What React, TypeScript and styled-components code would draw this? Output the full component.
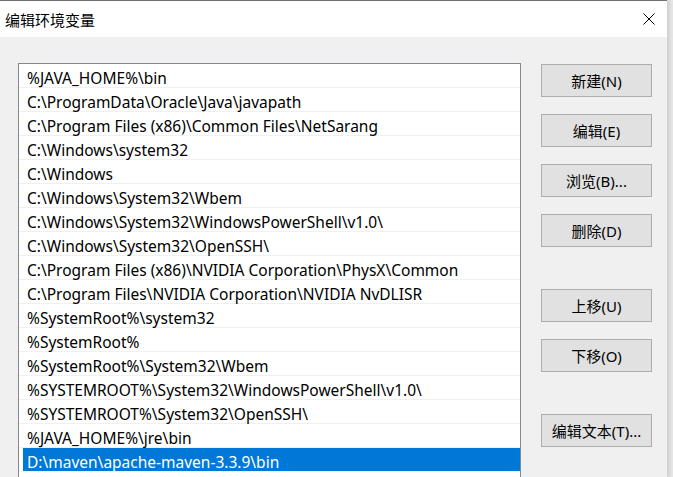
import styled, { createGlobalStyle } from "styled-components";

const GlobalStyle = createGlobalStyle`
  html, body {
    margin: 0;
    padding: 0;
    background: #e6e6e6;
  }
  body {
    font-family: "Noto Sans", "Noto Sans CJK SC", sans-serif;
  }
`;

const paths = [
  "%JAVA_HOME%\\bin",
  "C:\\ProgramData\\Oracle\\Java\\javapath",
  "C:\\Program Files (x86)\\Common Files\\NetSarang",
  "C:\\Windows\\system32",
  "C:\\Windows",
  "C:\\Windows\\System32\\Wbem",
  "C:\\Windows\\System32\\WindowsPowerShell\\v1.0\\",
  "C:\\Windows\\System32\\OpenSSH\\",
  "C:\\Program Files (x86)\\NVIDIA Corporation\\PhysX\\Common",
  "C:\\Program Files\\NVIDIA Corporation\\NVIDIA NvDLISR",
  "%SystemRoot%\\system32",
  "%SystemRoot%",
  "%SystemRoot%\\System32\\Wbem",
  "%SYSTEMROOT%\\System32\\WindowsPowerShell\\v1.0\\",
  "%SYSTEMROOT%\\System32\\OpenSSH\\",
  "%JAVA_HOME%\\jre\\bin",
  "D:\\maven\\apache-maven-3.3.9\\bin",
];

// gap = space above each button, in px
const buttons = [
  { label: "新建(N)", gap: 0 },
  { label: "编辑(E)", gap: 17 },
  { label: "浏览(B)...", gap: 17 },
  { label: "删除(D)", gap: 17 },
  { label: "上移(U)", gap: 42 },
  { label: "下移(O)", gap: 17 },
  { label: "编辑文本(T)...", gap: 42 },
];

const Screen = styled.div`
  display: flex;
  width: 673px;
  height: 477px;
  overflow: hidden;
`;

const Window = styled.div`
  width: 667px;
  height: 477px;
  display: flex;
  flex-direction: column;
  border-top: 1px solid #707070;
  box-sizing: border-box;
  box-shadow: 2px 0 4px rgba(0, 0, 0, 0.12);
  background: #f0f0f0;
`;

const TitleBar = styled.div`
  height: 36px;
  flex-shrink: 0;
  background: #ffffff;
  display: flex;
  align-items: center;
  justify-content: space-between;
  padding: 0 12px 0 5px;
  font-family: "Noto Sans CJK SC", sans-serif;
  font-size: 15px;
  color: #000;
`;

const CloseIcon = styled.svg`
  width: 12px;
  height: 12px;
`;

const Body = styled.div`
  flex: 1;
  display: flex;
  gap: 20px;
  padding: 26px 0 0 18px;
  overflow: hidden;
`;

const List = styled.div`
  width: 503px;
  height: 440px;
  flex-shrink: 0;
  box-sizing: border-box;
  border: 1px solid #828790;
  background: #ffffff;
  display: flex;
  flex-direction: column;
`;

const Row = styled.div<{ $selected?: boolean }>`
  height: 24px;
  flex-shrink: 0;
  box-sizing: border-box;
  border-bottom: 1px solid #f0f0f0;
  display: flex;
  align-items: center;
  padding-left: ${(p) => (p.$selected ? "4px" : "8px")};
  margin-left: ${(p) => (p.$selected ? "4px" : "0")};
  background: ${(p) => (p.$selected ? "#0078d7" : "transparent")};
  color: ${(p) => (p.$selected ? "#ffffff" : "#000000")};
  font-family: "Noto Sans", "Noto Sans CJK SC", sans-serif;
  font-size: 15.5px;
  padding-top: 4px;
  white-space: nowrap;
`;

const Actions = styled.div`
  display: flex;
  flex-direction: column;
  padding-top: 1px;
`;

const ActionButton = styled.div<{ $gap: number }>`
  width: 111px;
  height: 33px;
  box-sizing: border-box;
  margin-top: ${(p) => p.$gap}px;
  border: 1px solid #adadad;
  background: #e1e1e1;
  display: flex;
  align-items: center;
  justify-content: center;
  font-family: "Noto Sans", "Noto Sans CJK SC", sans-serif;
  font-size: 15px;
  color: #000;
`;

export default function App() {
  return (
    <>
      <GlobalStyle />
      <Screen>
        <Window>
          <TitleBar>
            <span>编辑环境变量</span>
            <CloseIcon viewBox="0 0 12 12">
              <path d="M0.5 0.5 L11.5 11.5 M11.5 0.5 L0.5 11.5" stroke="#000" strokeWidth="1" fill="none" />
            </CloseIcon>
          </TitleBar>
          <Body>
            <List>
              {paths.map((p, i) => (
                <Row key={p} $selected={i === paths.length - 1}>
                  {p}
                </Row>
              ))}
            </List>
            <Actions>
              {buttons.map((b) => (
                <ActionButton key={b.label} $gap={b.gap}>
                  {b.label}
                </ActionButton>
              ))}
            </Actions>
          </Body>
        </Window>
      </Screen>
    </>
  );
}
